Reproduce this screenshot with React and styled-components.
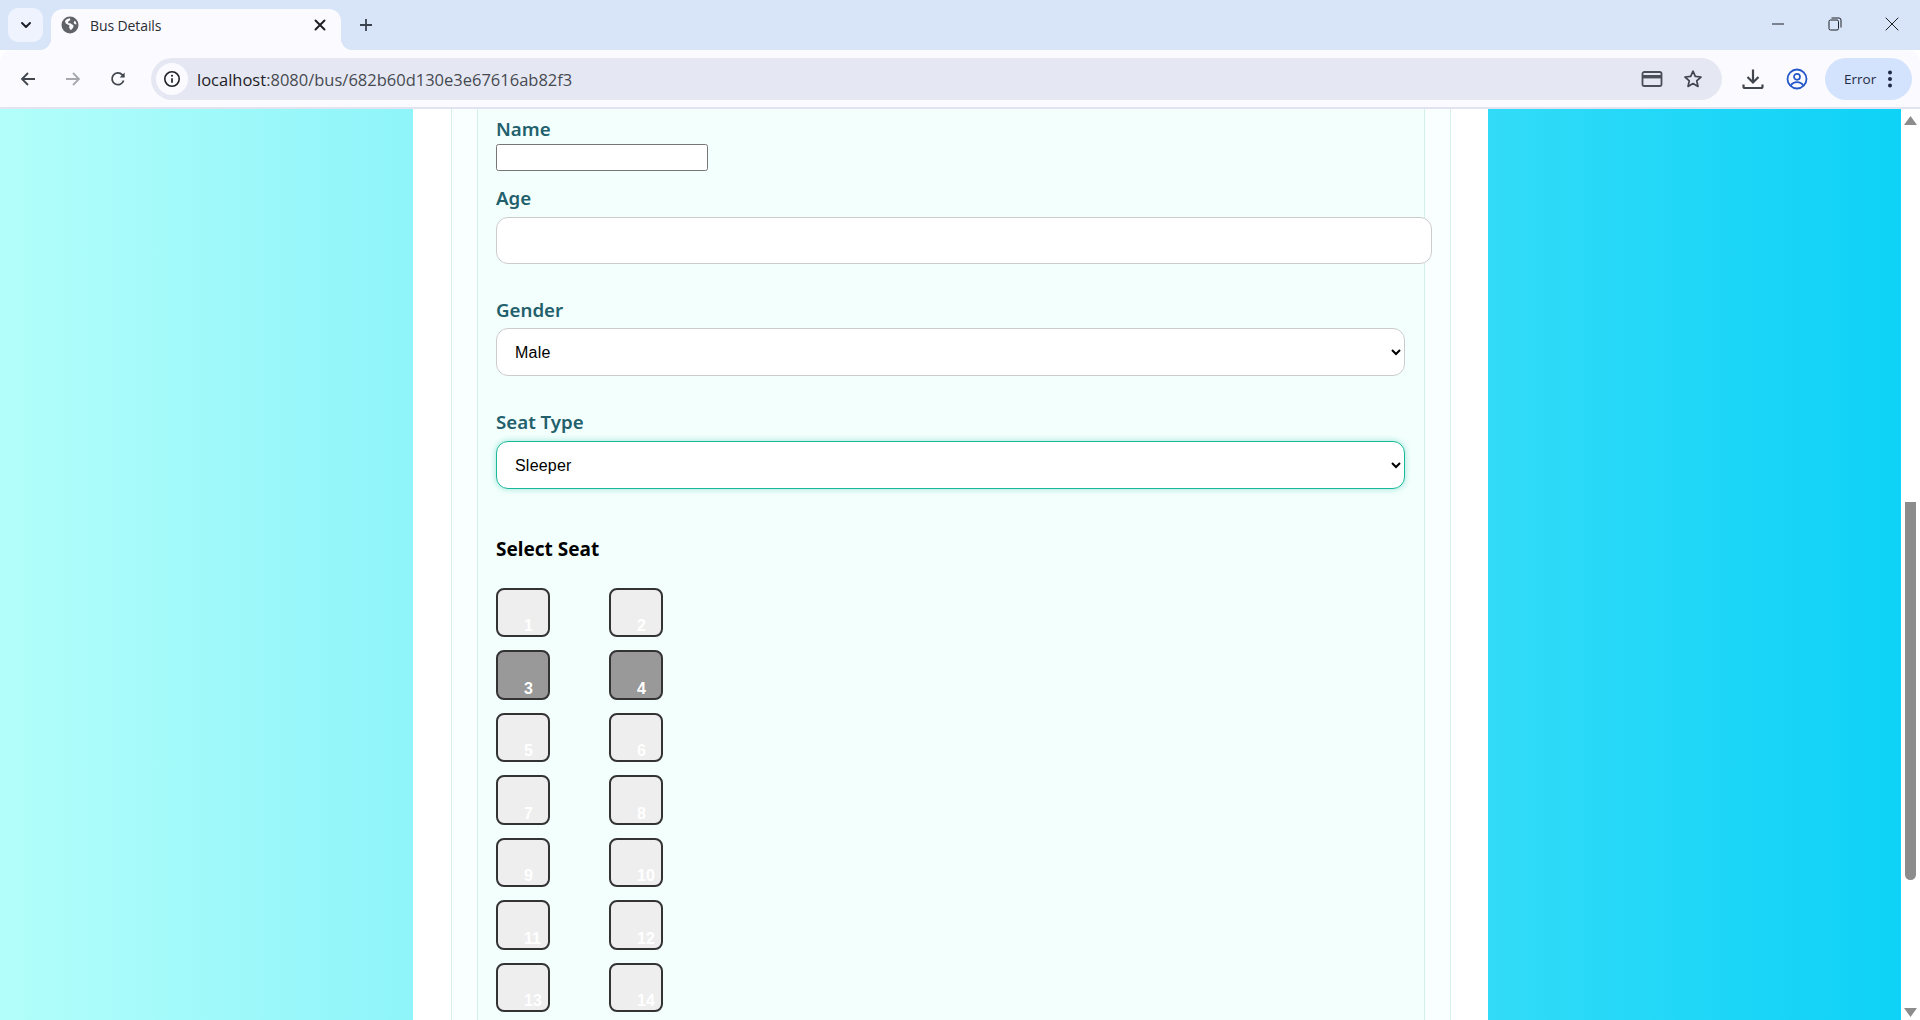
import styled, { createGlobalStyle } from 'styled-components'

const Global = createGlobalStyle`
html, body { margin: 0; padding: 0; height: 100%; overflow: hidden; }
#root { height: 100%; }
* { box-sizing: border-box; }
`

const Screen = styled.div`
  display: flex;
  flex-direction: column;
  width: 1920px;
  height: 1020px;
  overflow: hidden;
  background: #fff;
  font-family: "Open Sans", "Noto Sans", sans-serif;
`
const TabStrip = styled.div`
  display: flex;
  align-items: flex-end;
  height: 50px;
  background: #d8e4f7;
  padding-left: 8px;
`
const TabSearch = styled.div`
  display: flex;
  align-items: center;
  justify-content: center;
  width: 35px;
  height: 34px;
  margin-bottom: 8px;
  border-radius: 10px;
  background: #eef3fe;
`
const Tab = styled.div`
  position: relative;
  display: flex;
  align-items: center;
  width: 290px;
  height: 41px;
  margin-left: 8px;
  padding: 0 14px 9px 10px;
  border-radius: 12px 12px 0 0;
  background: #fbfaff;
  &::before, &::after {
    content: '';
    position: absolute;
    bottom: 0;
    width: 12px;
    height: 12px;
  }
  &::before { left: -12px; background: radial-gradient(circle at 0 0, transparent 12px, #fbfaff 12.5px); }
  &::after { right: -12px; background: radial-gradient(circle at 100% 0, transparent 12px, #fbfaff 12.5px); }
`
const TabTitle = styled.span`
  flex: 1;
  margin-left: 11px;
  font-size: 14px;
  letter-spacing: -0.1px;
  color: #2a2d33;
`
const NewTab = styled.div`
  display: flex;
  margin: 0 0 17px 17px;
`
const WindowButtons = styled.div`
  display: flex;
  align-items: center;
  margin-left: auto;
  align-self: flex-start;
  height: 48px;
`
const WindowButton = styled.div`
  display: flex;
  justify-content: center;
  width: 57px;
`
const Toolbar = styled.div`
  display: flex;
  align-items: center;
  height: 59px;
  padding: 1px 8px 0 0;
  background: #fbfaff;
  border-radius: 12px 12px 0 0;
  border-bottom: 2px solid #e1e4f0;
`
const NavButton = styled.div`
  display: flex;
  justify-content: center;
  width: 45px;
`
const NavGroup = styled.div`
  display: flex;
  width: 151px;
  padding-left: 5px;
`
const AddressBar = styled.div`
  display: flex;
  align-items: center;
  width: 1571px;
  height: 42px;
  padding: 0 19px 0 5px;
  border-radius: 21px;
  background: #e5e8f3;
`
const InfoChip = styled.div`
  display: flex;
  align-items: center;
  justify-content: center;
  width: 32px;
  height: 32px;
  border-radius: 50%;
  background: #fbfaff;
`
const Url = styled.div`
  flex: 1;
  margin-left: 9px;
  font-size: 16.5px;
  color: #474a51;
  b { font-weight: 400; color: #1f2126; }
`
const AddressIcon = styled.div`
  display: flex;
  margin-left: 20px;
`
const ToolIcons = styled.div`
  display: flex;
  margin-left: 20px;
  gap: 22px;
`
const ErrorPill = styled.div`
  display: flex;
  align-items: center;
  width: 87px;
  height: 42px;
  margin-left: 17px;
  padding-left: 19px;
  border-radius: 21px;
  background: #d3e3fd;
  font-size: 13.5px;
  color: #1f2a44;
  svg { margin-left: 11px; }
`
const Viewport = styled.div`
  flex: 1;
  display: flex;
  min-height: 0;
`
const PageArea = styled.div`
  flex: 1;
  display: flex;
  justify-content: center;
  overflow: hidden;
  background: linear-gradient(to right, #b2fefa, #0ed2f7);
`
const WhiteBox = styled.div`
  display: flex;
  width: 1075px;
  padding: 0 37px 0 38px;
  background: #fff;
`
const OuterCard = styled.div`
  flex: 1;
  display: flex;
  padding: 0 25px;
  background: #f9fffe;
  border-left: 1px solid #d3f1e9;
  border-right: 1px solid #d3f1e9;
`
const InnerCard = styled.div`
  flex: 1;
  min-width: 0;
  padding: 8px 19px 0 18px;
  background: #f3fffd;
  border-left: 1px solid #d3f1e9;
  border-right: 1px solid #d3f1e9;
`
const Label = styled.label`
  display: block;
  height: 24px;
  margin-bottom: ${p => p.$gap}px;
  font-family: "Noto Sans", sans-serif;
  font-size: 18.7px;
  font-weight: 600;
  line-height: 24px;
  color: #22606c;
`
const NameInput = styled.input`
  display: block;
  width: 212px;
  height: 27px;
  margin-bottom: 15px;
  padding: 1px 2px;
  border: 1px solid #767676;
  border-radius: 2.5px;
  background: #fff;
`
const AgeInput = styled.input`
  display: block;
  box-sizing: content-box;
  width: 100%;
  height: 21px;
  margin-bottom: 34px;
  padding: 12px 12.5px;
  border: 1px solid #ccc;
  border-radius: 12px;
  background: #fff;
  outline: none;
`
const Select = styled.select`
  display: block;
  width: 100%;
  height: 48px;
  margin-bottom: 34px;
  padding: 0 14px;
  border: 1px solid ${p => (p.$focus ? '#18b99a' : '#ccc')};
  border-radius: 12px;
  background: #fff;
  color: #000;
  font-family: "Liberation Sans", Arial, sans-serif;
  font-size: 16px;
  letter-spacing: 0.2px;
  outline: none;
  box-shadow: ${p => (p.$focus ? '0 0 6px rgba(26, 188, 156, 0.4)' : 'none')};
`
const SeatHeading = styled.div`
  height: 24px;
  margin: 48px 0 26.9px;
  font-family: "Noto Sans", sans-serif;
  font-size: 19px;
  font-weight: 700;
  line-height: 24px;
  color: #000;
`
const SeatGrid = styled.div`
  display: grid;
  grid-template-columns: 54px 54px;
  grid-auto-rows: 49.5px;
  column-gap: 59px;
  row-gap: 13px;
`
const Seat = styled.div`
  display: flex;
  align-items: flex-end;
  padding: 0 0 0 26px;
  border: 2px solid #333;
  border-radius: 8px;
  background: ${p => (p.$taken ? '#999' : '#eee')};
  color: #fff;
  font-family: "Liberation Sans", Arial, sans-serif;
  font-size: 16px;
  font-weight: 700;
  line-height: 18px;
`
const Scrollbar = styled.div`
  display: flex;
  flex-direction: column;
  align-items: center;
  width: 19px;
  background: #fff;
`
const ScrollArrow = styled.svg`
  flex: none;
  margin: ${p => p.$margin};
`
const ScrollThumb = styled.div`
  width: 11px;
  height: 378px;
  margin: 377px 0 128px;
  border-radius: 0 0 6px 6px;
  background: #8c8c8c;
`

const stroke = { fill: 'none', strokeLinecap: 'round', strokeLinejoin: 'round' }

function Chevron() {
  return (
    <svg width="12" height="12" viewBox="0 0 12 12">
      <path d="M2 4l4 4 4-4" stroke="#1f2126" strokeWidth="2" {...stroke} />
    </svg>
  )
}
function GlobeIcon() {
  return (
    <svg width="18" height="18" viewBox="0 0 18 18">
      <circle cx="9" cy="9" r="8.5" fill="#5f6368" />
      <path d="M8 2.600c-1.500.3-3 1.100-4 2.400l.6 2.200 2.400 1.600c.8 0 1.300.3 1.500 1l-.4 1.400 1.100 2.500h1.200l2-2.500v-2l-3-1.900-1.900-.1-.5-1.200 1.400-1.400 1-.2-.4-2.200zM15.500 8.500l-2.200-.5-.6-2.100 1.200-1.100c.9 1 1.500 2.300 1.600 3.700z" fill="#fbfaff" />
    </svg>
  )
}
function CloseIcon() {
  return (
    <svg width="14" height="14" viewBox="0 0 14 14">
      <path d="M2.500 2.500l9 9M11.500 2.500l-9 9" stroke="#1f2126" strokeWidth="2" {...stroke} />
    </svg>
  )
}
function PlusIcon() {
  return (
    <svg width="16" height="16" viewBox="0 0 16 16">
      <path d="M8 2v12M2 8h12" stroke="#3c4350" strokeWidth="1.800" fill="none" />
    </svg>
  )
}
function MinimizeIcon() {
  return (
    <svg width="14" height="14" viewBox="0 0 14 14">
      <path d="M1 7h12" stroke="#1f2126" strokeWidth="1" fill="none" />
    </svg>
  )
}
function RestoreIcon() {
  return (
    <svg width="14" height="14" viewBox="0 0 14 14">
      <rect x="1" y="3" width="9.500" height="10" rx="1.500" stroke="#1f2126" strokeWidth="1" fill="none" />
      <path d="M3.500 1h7.500a2 2 0 0 1 2 2v7.500" stroke="#1f2126" strokeWidth="1" fill="none" />
    </svg>
  )
}
function WinCloseIcon() {
  return (
    <svg width="14" height="14" viewBox="0 0 14 14">
      <path d="M.7.7l12.600 12.600M13.300.7L.7 13.300" stroke="#1f2126" strokeWidth="1" fill="none" />
    </svg>
  )
}
function BackIcon({ color = '#41454d', flip }) {
  return (
    <svg width="18" height="18" viewBox="0 0 18 18" style={flip ? { transform: 'scaleX(-1)' } : undefined}>
      <path d="M16 9H3M9 3L3 9l6 6" stroke={color} strokeWidth="1.800" fill="none" />
    </svg>
  )
}
function ReloadIcon() {
  return (
    <svg width="18" height="18" viewBox="0 0 18 18">
      <path d="M14.600 10.500A5.900 5.900 0 1 1 13.300 4.800L15 6.600" stroke="#41454d" strokeWidth="1.800" fill="none" />
      <path d="M15.600 2.400v5h-5z" fill="#41454d" />
    </svg>
  )
}
function InfoIcon() {
  return (
    <svg width="18" height="18" viewBox="0 0 18 18">
      <circle cx="9" cy="9" r="7.200" stroke="#1f2126" strokeWidth="1.600" fill="none" />
      <path d="M9 8.200v4.600" stroke="#1f2126" strokeWidth="1.700" fill="none" />
      <circle cx="9" cy="5.700" r="1.050" fill="#1f2126" />
    </svg>
  )
}
function CardIcon() {
  return (
    <svg width="22" height="18" viewBox="0 0 22 18">
      <rect x="1.500" y="2" width="19" height="14" rx="1.800" stroke="#4a4e57" strokeWidth="1.800" fill="none" />
      <rect x="1.500" y="5" width="19" height="3.400" fill="#4a4e57" />
    </svg>
  )
}
function StarIcon() {
  return (
    <svg width="20" height="20" viewBox="0 0 20 20">
      <path d="M10 2.200l2.300 5.200 5.700.6-4.300 3.800 1.300 5.600-5-2.900-5 2.900 1.300-5.600L2 8l5.700-.6z" stroke="#41454d" strokeWidth="1.700" strokeLinejoin="round" fill="none" />
    </svg>
  )
}
function DownloadIcon() {
  return (
    <svg width="22" height="22" viewBox="0 0 22 22">
      <path d="M11 1.500v12.500M5.500 9l5.500 5.500L16.500 9" stroke="#41454d" strokeWidth="2.200" fill="none" />
      <path d="M1.500 16.500v2a1.500 1.500 0 0 0 1.500 1.500h16a1.500 1.500 0 0 0 1.500-1.500v-2" stroke="#41454d" strokeWidth="2.200" fill="none" />
    </svg>
  )
}
function ProfileIcon() {
  return (
    <svg width="22" height="22" viewBox="0 0 22 22">
      <circle cx="11" cy="11" r="9.500" stroke="#2458c9" strokeWidth="1.800" fill="none" />
      <circle cx="11" cy="8.800" r="3" stroke="#2458c9" strokeWidth="1.700" fill="none" />
      <path d="M4.800 17.500c1.400-2.300 3.700-3.300 6.200-3.300s4.800 1 6.200 3.300" stroke="#2458c9" strokeWidth="1.700" fill="none" />
    </svg>
  )
}
function DotsIcon() {
  return (
    <svg width="6" height="18" viewBox="0 0 6 18">
      <circle cx="3" cy="2.500" r="2" fill="#1f2a44" />
      <circle cx="3" cy="9" r="2" fill="#1f2a44" />
      <circle cx="3" cy="15.500" r="2" fill="#1f2a44" />
    </svg>
  )
}

const seats = Array.from({ length: 14 }, (_, i) => i + 1)

function App() {
  return (
    <Screen>
      <Global />
      <TabStrip>
        <TabSearch><Chevron /></TabSearch>
        <Tab>
          <GlobeIcon />
          <TabTitle>Bus Details</TabTitle>
          <CloseIcon />
        </Tab>
        <NewTab><PlusIcon /></NewTab>
        <WindowButtons>
          <WindowButton><MinimizeIcon /></WindowButton>
          <WindowButton><RestoreIcon /></WindowButton>
          <WindowButton><WinCloseIcon /></WindowButton>
        </WindowButtons>
      </TabStrip>
      <Toolbar>
        <NavGroup>
          <NavButton><BackIcon /></NavButton>
          <NavButton><BackIcon flip color="#a6a8ae" /></NavButton>
          <NavButton><ReloadIcon /></NavButton>
        </NavGroup>
        <AddressBar>
          <InfoChip><InfoIcon /></InfoChip>
          <Url><b>localhost</b>:8080/bus/682b60d130e3e67616ab82f3</Url>
          <AddressIcon><CardIcon /></AddressIcon>
          <AddressIcon><StarIcon /></AddressIcon>
        </AddressBar>
        <ToolIcons>
          <DownloadIcon />
          <ProfileIcon />
        </ToolIcons>
        <ErrorPill>Error<DotsIcon /></ErrorPill>
      </Toolbar>
      <Viewport>
        <PageArea>
          <WhiteBox>
            <OuterCard>
              <InnerCard>
                <Label $gap={3}>Name</Label>
                <NameInput />
                <Label $gap={7}>Age</Label>
                <AgeInput />
                <Label $gap={6}>Gender</Label>
                <Select defaultValue="Male">
                  <option>Male</option>
                  <option>Female</option>
                </Select>
                <Label $gap={7}>Seat Type</Label>
                <Select $focus defaultValue="Sleeper">
                  <option>Sleeper</option>
                  <option>Seater</option>
                </Select>
                <SeatHeading>Select Seat</SeatHeading>
                <SeatGrid>
                  {seats.map(n => (
                    <Seat key={n} $taken={n === 3 || n === 4}>{n}</Seat>
                  ))}
                </SeatGrid>
              </InnerCard>
            </OuterCard>
          </WhiteBox>
        </PageArea>
        <Scrollbar>
          <ScrollArrow $margin="7px 0 0" width="13" height="9" viewBox="0 0 13 9">
            <path d="M6.500 0L13 9H0z" fill="#8c8c8c" />
          </ScrollArrow>
          <ScrollThumb />
          <ScrollArrow $margin="0" width="13" height="9" viewBox="0 0 13 9">
            <path d="M0 0h13L6.500 9z" fill="#8c8c8c" />
          </ScrollArrow>
        </Scrollbar>
      </Viewport>
    </Screen>
  )
}

export default App
